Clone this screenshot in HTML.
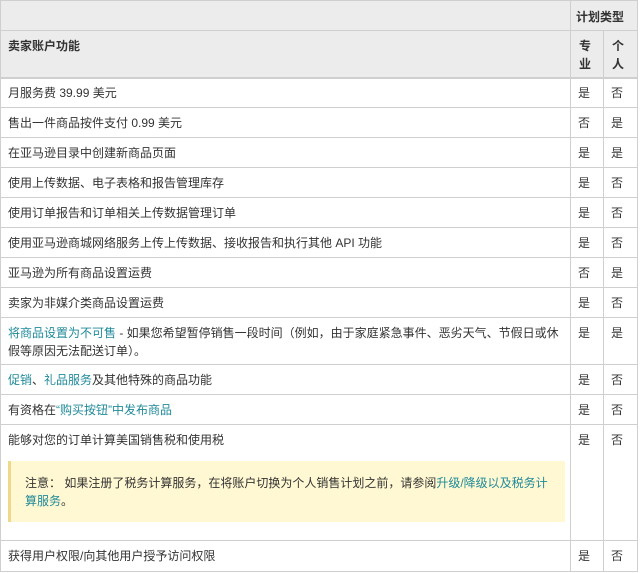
<!DOCTYPE html>
<html><head><meta charset="utf-8"><style>
*{margin:0;padding:0;box-sizing:border-box}
body{width:640px;height:573px;background:#fff;font-family:"Liberation Sans","Noto Sans CJK SC",sans-serif;font-size:12px;color:#333;position:relative;overflow:hidden}
.r{position:absolute;left:0;width:637px;border-top:1px solid #cfcfcf}
.v{position:absolute;border-left:1px solid #cfcfcf}
.t{position:absolute;line-height:18px;white-space:nowrap}
a{color:#1f8a9a;text-decoration:none}
.b{font-weight:bold}
</style></head><body>
<div style="position:absolute;left:0;top:0;width:637px;height:77px;background:#ececec"></div>
<div class="r" style="top:0"></div>
<div class="r" style="top:30px;width:570px"></div>
<div class="r" style="top:30px;left:570px;width:67px"></div>
<div class="r" style="top:77px;border-top-width:2px"></div>
<div class="r" style="top:107px"></div>
<div class="r" style="top:137px"></div>
<div class="r" style="top:167px"></div>
<div class="r" style="top:197px"></div>
<div class="r" style="top:227px"></div>
<div class="r" style="top:257px"></div>
<div class="r" style="top:287px"></div>
<div class="r" style="top:317px"></div>
<div class="r" style="top:364px"></div>
<div class="r" style="top:394px"></div>
<div class="r" style="top:424px"></div>
<div class="r" style="top:540px"></div>
<div class="r" style="top:571px"></div>
<div class="v" style="left:0;top:0;height:572px"></div>
<div class="v" style="left:570px;top:0;height:572px"></div>
<div class="v" style="left:603px;top:30px;height:542px"></div>
<div class="v" style="left:637px;top:0;height:572px"></div>

<div class="t b" style="left:576px;top:8px">计划类型</div>
<div class="t b" style="left:8px;top:37px">卖家账户功能</div>
<div class="t b" style="left:579px;top:37px">专</div>
<div class="t b" style="left:579px;top:55px">业</div>
<div class="t b" style="left:612px;top:37px">个</div>
<div class="t b" style="left:612px;top:55px">人</div>

<div class="t" style="left:8px;top:84px">月服务费 39.99 美元</div>
<div class="t" style="left:8px;top:114px">售出一件商品按件支付 0.99 美元</div>
<div class="t" style="left:8px;top:144px">在亚马逊目录中创建新商品页面</div>
<div class="t" style="left:8px;top:174px">使用上传数据、电子表格和报告管理库存</div>
<div class="t" style="left:8px;top:204px">使用订单报告和订单相关上传数据管理订单</div>
<div class="t" style="left:8px;top:234px">使用亚马逊商城网络服务上传上传数据、接收报告和执行其他 API 功能</div>
<div class="t" style="left:8px;top:264px">亚马逊为所有商品设置运费</div>
<div class="t" style="left:8px;top:294px">卖家为非媒介类商品设置运费</div>
<div class="t" style="left:8px;top:324px"><a>将商品设置为不可售</a> - 如果您希望暂停销售一段时间（例如，由于家庭紧急事件、恶劣天气、节假日或休</div>
<div class="t" style="left:8px;top:342px">假等原因无法配送订单）。</div>
<div class="t" style="left:8px;top:371px"><a>促销</a>、<a>礼品服务</a>及其他特殊的商品功能</div>
<div class="t" style="left:8px;top:401px">有资格在<a>“购买按钮”中发布商品</a></div>
<div class="t" style="left:8px;top:431px">能够对您的订单计算美国销售税和使用税</div>
<div style="position:absolute;left:8px;top:461px;width:557px;height:61px;background:#fff8d2;border-left:3px solid #ecd98c"></div>
<div class="t" style="left:25px;top:474px">注意： 如果注册了税务计算服务，在将账户切换为个人销售计划之前，请参阅<a>升级/降级以及税务计</a></div>
<div class="t" style="left:25px;top:492px"><a>算服务</a>。</div>
<div class="t" style="left:8px;top:547px">获得用户权限/向其他用户授予访问权限</div>

<div class="t" style="left:578px;top:84px">是</div><div class="t" style="left:611px;top:84px">否</div>
<div class="t" style="left:578px;top:114px">否</div><div class="t" style="left:611px;top:114px">是</div>
<div class="t" style="left:578px;top:144px">是</div><div class="t" style="left:611px;top:144px">是</div>
<div class="t" style="left:578px;top:174px">是</div><div class="t" style="left:611px;top:174px">否</div>
<div class="t" style="left:578px;top:204px">是</div><div class="t" style="left:611px;top:204px">否</div>
<div class="t" style="left:578px;top:234px">是</div><div class="t" style="left:611px;top:234px">否</div>
<div class="t" style="left:578px;top:264px">否</div><div class="t" style="left:611px;top:264px">是</div>
<div class="t" style="left:578px;top:294px">是</div><div class="t" style="left:611px;top:294px">否</div>
<div class="t" style="left:578px;top:324px">是</div><div class="t" style="left:611px;top:324px">是</div>
<div class="t" style="left:578px;top:371px">是</div><div class="t" style="left:611px;top:371px">否</div>
<div class="t" style="left:578px;top:401px">是</div><div class="t" style="left:611px;top:401px">否</div>
<div class="t" style="left:578px;top:431px">是</div><div class="t" style="left:611px;top:431px">否</div>
<div class="t" style="left:578px;top:547px">是</div><div class="t" style="left:611px;top:547px">否</div>
</body></html>
